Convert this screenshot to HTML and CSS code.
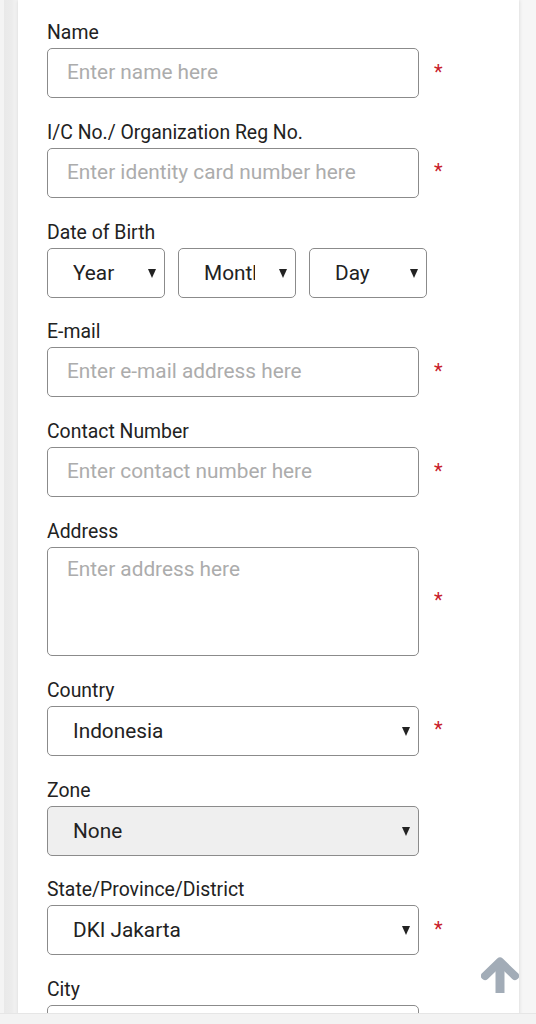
FILE: index.html
```html
<!DOCTYPE html>
<html lang="en">
<head>
<meta charset="utf-8">
<title>Registration form</title>
<link rel="stylesheet" href="styles.css">
</head>
<body>
<div class="screen">
  <div class="card">
    <form class="form">
      <div class="group">
        <label class="label">Name</label>
        <div class="row">
          <input class="control" type="text" placeholder="Enter name here">
          <span class="req">*</span>
        </div>
      </div>
      <div class="group">
        <label class="label">I/C No./ Organization Reg No.</label>
        <div class="row">
          <input class="control" type="text" placeholder="Enter identity card number here">
          <span class="req">*</span>
        </div>
      </div>
      <div class="group">
        <label class="label">Date of Birth</label>
        <div class="row dob">
          <span class="sel small"><select><option>Year</option></select></span>
          <span class="sel small"><select><option>Month</option></select></span>
          <span class="sel small"><select><option>Day</option></select></span>
        </div>
      </div>
      <div class="group">
        <label class="label">E-mail</label>
        <div class="row">
          <input class="control" type="text" placeholder="Enter e-mail address here">
          <span class="req">*</span>
        </div>
      </div>
      <div class="group">
        <label class="label">Contact Number</label>
        <div class="row">
          <input class="control" type="text" placeholder="Enter contact number here">
          <span class="req">*</span>
        </div>
      </div>
      <div class="group">
        <label class="label">Address</label>
        <div class="row">
          <textarea class="control area" placeholder="Enter address here"></textarea>
          <span class="req">*</span>
        </div>
      </div>
      <div class="group">
        <label class="label">Country</label>
        <div class="row">
          <span class="sel wide"><select><option>Indonesia</option></select></span>
          <span class="req">*</span>
        </div>
      </div>
      <div class="group">
        <label class="label">Zone</label>
        <div class="row">
          <span class="sel wide disabled"><select><option>None</option></select></span>
        </div>
      </div>
      <div class="group">
        <label class="label">State/Province/District</label>
        <div class="row">
          <span class="sel wide"><select><option>DKI Jakarta</option></select></span>
          <span class="req">*</span>
        </div>
      </div>
      <div class="group">
        <label class="label">City</label>
        <div class="row">
          <span class="sel wide"><select><option></option></select></span>
        </div>
      </div>
    </form>
  </div>
  <a class="totop" href="#" aria-label="Back to top">
    <svg width="38" height="36" viewBox="0 0 38 36" aria-hidden="true">
      <path d="M4 19 L19 4.5 L34 19" fill="none" stroke="#a2acb7" stroke-width="8" stroke-linecap="round" stroke-linejoin="round"/>
      <path d="M19 8 L19 36" fill="none" stroke="#a2acb7" stroke-width="9"/>
    </svg>
  </a>
</div>
<div class="bottombar"></div>
</body>
</html>
```
FILE: styles.css
```css
* { box-sizing: border-box; }
html, body { margin: 0; padding: 0; }
body {
  background: #f1f1f1;
  font-family: Roboto, "Liberation Sans", Arial, sans-serif;
  color: #222;
}
.screen {
  position: relative;
  height: 1013px;
  overflow: hidden;
  padding: 0 17px 0 18px;
  background: linear-gradient(to right, #f4f4f4 0, #f4f4f4 4px, #e9e9e9 4px, #ececec 12px, #f6f6f6 17px, #f6f6f6 100%);
}
.card {
  background: #fff;
  min-height: 1013px;
  box-shadow: 0 0 4px rgba(0, 0, 0, 0.14);
  padding: 0 29px;
}
.form {
  display: flex;
  flex-direction: column;
  gap: 22.8px;
  padding-top: 21px;
}
.group {
  display: flex;
  flex-direction: column;
  gap: 3px;
}
.label {
  font-size: 19.4px;
  line-height: 24px;
  color: #222;
}
.row {
  display: flex;
  align-items: center;
  gap: 13px;
}
.dob { gap: 13px; }
.control {
  width: 372px;
  height: 50px;
  border: 1.5px solid #8b8b8b;
  border-radius: 5px;
  padding: 0 19px 2px;
  font-family: Roboto, "Liberation Sans", Arial, sans-serif;
  font-size: 20.8px;
  color: #222;
  background: #fff;
  outline: none;
}
.control::placeholder { color: #acacac; }
.area {
  height: 109px;
  padding-top: 9px;
  line-height: 25px;
  resize: none;
}
.req {
  color: #c8202a;
  font-size: 20px;
  line-height: 20px;
  margin-left: 2px;
  margin-top: -3px;
}
.sel {
  position: relative;
  display: block;
  height: 50px;
}
.sel select {
  appearance: none;
  -webkit-appearance: none;
  width: 100%;
  height: 50px;
  border: 1.5px solid #8b8b8b;
  border-radius: 5px;
  padding: 0 40px 0 25px;
  font-family: Roboto, "Liberation Sans", Arial, sans-serif;
  font-size: 20.8px;
  color: #222;
  background: #fff;
  outline: none;
}
.sel::after {
  content: "";
  position: absolute;
  right: 9px;
  top: 21px;
  width: 0;
  height: 0;
  border-left: 4.5px solid transparent;
  border-right: 4.5px solid transparent;
  border-top: 9px solid #222;
  pointer-events: none;
}
.small { width: 118px; }
.wide { width: 372px; }
.disabled select { background: #efefef; }
.totop {
  position: absolute;
  left: 481px;
  top: 957px;
  width: 38px;
  height: 36px;
  display: block;
}
.totop svg { display: block; }
.bottombar {
  height: 11px;
  background: #f3f3f3;
  border-top: 1px solid #e6e6e6;
}
```
